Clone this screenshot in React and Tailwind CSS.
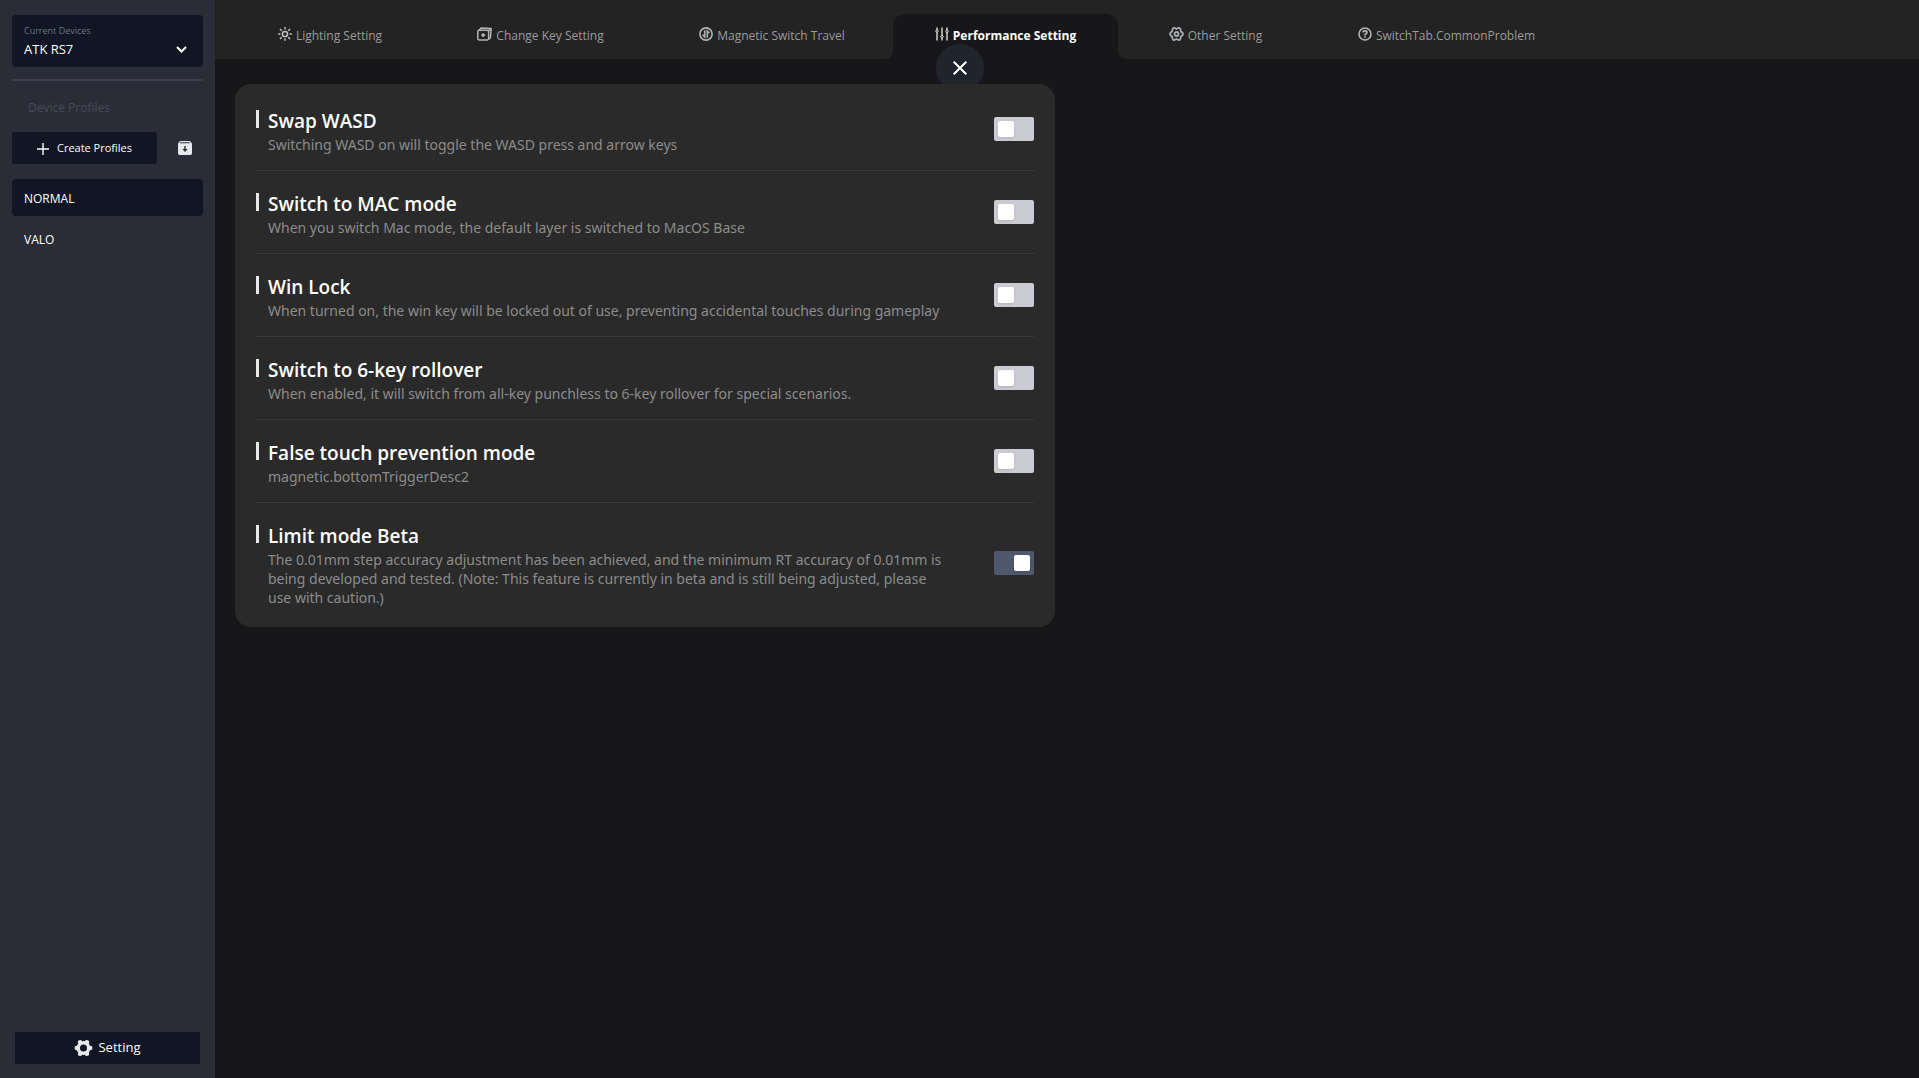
import React, { useState } from "react";

const tabs = [
  { id: "lighting", label: "Lighting Setting", icon: SunIcon, width: "w-[200px]" },
  { id: "keys", label: "Change Key Setting", icon: KeyIcon, width: "w-[221px]" },
  { id: "travel", label: "Magnetic Switch Travel", icon: TravelIcon, width: "w-[242px]" },
  { id: "performance", label: "Performance Setting", icon: SlidersIcon, width: "w-[225px]" },
  { id: "other", label: "Other Setting", icon: GearOutlineIcon, width: "w-[195px]" },
  { id: "problem", label: "SwitchTab.CommonProblem", icon: QuestionIcon, width: "w-[267px]" },
];

const options = [
  {
    id: "swap",
    title: "Swap WASD",
    desc: "Switching WASD on will toggle the WASD press and arrow keys",
  },
  {
    id: "mac",
    title: "Switch to MAC mode",
    desc: "When you switch Mac mode, the default layer is switched to MacOS Base",
  },
  {
    id: "winlock",
    title: "Win Lock",
    desc: "When turned on, the win key will be locked out of use, preventing accidental touches during gameplay",
  },
  {
    id: "rollover",
    title: "Switch to 6-key rollover",
    desc: "When enabled, it will switch from all-key punchless to 6-key rollover for special scenarios.",
  },
  {
    id: "falsetouch",
    title: "False touch prevention mode",
    desc: "magnetic.bottomTriggerDesc2",
  },
  {
    id: "limit",
    title: "Limit mode Beta",
    desc: "The 0.01mm step accuracy adjustment has been achieved, and the minimum RT accuracy of 0.01mm is being developed and tested. (Note: This feature is currently in beta and is still being adjusted, please use with caution.)",
  },
];

export default function App() {
  const [activeTab, setActiveTab] = useState("performance");
  const [profile, setProfile] = useState("NORMAL");
  const [enabled, setEnabled] = useState({ limit: true });

  const toggle = (id) => setEnabled((prev) => ({ ...prev, [id]: !prev[id] }));

  return (
    <div className="flex min-h-screen bg-[#171719] font-['Open_Sans','Noto_Sans',sans-serif] text-white">
      <Sidebar profile={profile} onSelect={setProfile} />

      <main className="relative min-w-0 flex-1">
        <nav className="flex h-[59px] items-end bg-[#232323] pl-[15px]">
          {tabs.map((tab) => (
            <Tab
              key={tab.id}
              tab={tab}
              active={tab.id === activeTab}
              onClick={() => setActiveTab(tab.id)}
            />
          ))}
        </nav>

        <section className="relative z-10 mt-[25px] ml-5 max-w-[820px] rounded-2xl bg-[#2a2a2a] px-[21px] py-1">
          {options.map((option) => (
            <OptionRow
              key={option.id}
              option={option}
              checked={!!enabled[option.id]}
              onChange={() => toggle(option.id)}
            />
          ))}
        </section>
      </main>

      <button
        type="button"
        aria-label="Close"
        className="absolute top-11 left-1/2 flex size-12 -translate-x-1/2 items-center justify-center rounded-full bg-[#20242b]"
      >
        <svg width="14" height="14" viewBox="0 0 14 14" fill="none" stroke="#fff" strokeWidth="2">
          <path d="M0.7 0.7L13.3 13.3M13.3 0.7L0.7 13.3" />
        </svg>
      </button>
    </div>
  );
}

function Sidebar({ profile, onSelect }) {
  return (
    <aside className="flex w-[215px] shrink-0 flex-col bg-[#2a2d38] px-3 pt-[15px] pb-[14px]">
      <div className="relative h-[52px] rounded bg-[#101624]">
        <label htmlFor="device" className="absolute top-2 left-3 text-[9px] leading-4 text-[#6b7280]">
          Current Devices
        </label>
        <select
          id="device"
          className="h-full w-full appearance-none rounded bg-transparent px-3 pt-[18px] text-[13px] text-white"
        >
          <option>ATK RS7</option>
        </select>
        <svg
          className="pointer-events-none absolute top-[31px] right-4"
          width="11"
          height="7"
          viewBox="0 0 11 7"
          fill="none"
          stroke="#fff"
          strokeWidth="2"
        >
          <path d="M1 1L5.5 5.5L10 1" />
        </svg>
      </div>

      <hr className="mt-3 border-t-2 border-[#3b404c]" />
      <p className="mt-[17px] px-4 text-xs leading-5 text-[#464b57]">Device Profiles</p>

      <div className="mt-[14px] flex items-center">
        <button
          type="button"
          className="flex h-8 w-[145px] items-center justify-center gap-2 rounded-xs bg-[#101624] pt-px text-[11px]"
        >
          <svg width="12" height="12" viewBox="0 0 12 12" stroke="#fff" strokeWidth="1.4">
            <path d="M6 0V12M0 6H12" />
          </svg>
          Create Profiles
        </button>
        <button type="button" aria-label="Import profile" className="ml-[21px]">
          <svg width="14" height="14" viewBox="0 0 14 14">
            <path
              fill="#e5e7eb"
              fillRule="evenodd"
              d="M2.2 0H11.8L14 2.4V12.6Q14 14 12.6 14H1.4Q0 14 0 12.6V2.4ZM2.6 1.2L1.8 2.2H12.2L11.4 1.2ZM6.3 5V8H4.4L7 11L9.6 8H7.7V5Z"
            />
          </svg>
        </button>
      </div>

      <div className="mt-[15px] flex flex-col gap-1">
        {["NORMAL", "VALO"].map((name) => (
          <button
            key={name}
            type="button"
            onClick={() => onSelect(name)}
            className={`h-[37px] rounded px-3 pt-0.5 text-left text-xs ${name === profile ? "bg-[#101624]" : ""}`}
          >
            {name}
          </button>
        ))}
      </div>

      <button
        type="button"
        className="mx-[3px] mt-auto flex h-8 items-center justify-center gap-[5px] bg-[#101624] text-[13px]"
      >
        <GearIcon />
        Setting
      </button>
    </aside>
  );
}

function Tab({ tab, active, onClick }) {
  const Icon = tab.icon;
  return (
    <button
      type="button"
      onClick={onClick}
      className={`relative flex h-[45px] shrink-0 items-start justify-center gap-1 pt-[13px] text-xs leading-[18px] whitespace-nowrap ${tab.width} ${
        active ? "rounded-t-xl bg-[#171719] font-bold text-white" : "text-[#9b9b9b]"
      }`}
    >
      {active && (
        <>
          <Flare className="absolute bottom-0 -left-2" />
          <Flare className="absolute -right-2 bottom-0 -scale-x-100" />
        </>
      )}
      <Icon />
      {tab.label}
    </button>
  );
}

// curved foot on either side of the active tab
function Flare({ className }) {
  return (
    <svg className={className} width="8" height="8" viewBox="0 0 8 8" fill="#171719">
      <path d="M8 0V8H0A8 8 0 0 0 8 0Z" />
    </svg>
  );
}

function OptionRow({ option, checked, onChange }) {
  return (
    <div className="flex items-center justify-between border-b border-[#3a3a3a] pt-5 pb-4 last:border-b-0">
      <div className="max-w-[692px]">
        <div className="flex items-start">
          <span className="mt-0.5 h-[18px] w-[3px] bg-[#e8e8e8]" />
          <label htmlFor={option.id} className="ml-[9px] text-[19px] leading-[26px] font-semibold">
            {option.title}
          </label>
        </div>
        <p className="mt-px ml-3 font-['Noto_Sans','Open_Sans',sans-serif] text-sm leading-[19px] text-[#8c8c8c]">
          {option.desc}
        </p>
      </div>
      <input
        id={option.id}
        type="checkbox"
        role="switch"
        checked={checked}
        onChange={onChange}
        className="relative mb-1 h-6 w-10 shrink-0 cursor-pointer appearance-none rounded-xs bg-[#cbccd3] before:absolute before:top-1 before:left-1 before:size-4 before:rounded-xs before:bg-white before:shadow checked:bg-[#50586d] checked:before:left-5"
      />
    </div>
  );
}

function GearIcon() {
  return (
    <svg width="19" height="18" viewBox="0 0 19 18" fill="#e5e7eb">
      <circle cx="9.5" cy="9" r="5.2" fill="none" stroke="#e5e7eb" strokeWidth="3.4" />
      <circle cx="16.2" cy="9" r="2.3" />
      <circle cx="12.9" cy="3.2" r="2.3" />
      <circle cx="6.1" cy="3.2" r="2.3" />
      <circle cx="2.8" cy="9" r="2.3" />
      <circle cx="6.1" cy="14.8" r="2.3" />
      <circle cx="12.9" cy="14.8" r="2.3" />
    </svg>
  );
}

function SunIcon() {
  return (
    <svg width="14" height="14" viewBox="0 0 14 14" fill="none" stroke="#c4c4c4" strokeWidth="1.5">
      <circle cx="7" cy="7" r="2.6" />
      <path d="M7 0.2V2.4M7 11.6V13.8M0.2 7H2.4M11.6 7H13.8M2 2L3.7 3.7M10.3 10.3L12 12M2 12L3.7 10.3M10.3 3.7L12 2" />
    </svg>
  );
}

function KeyIcon() {
  return (
    <svg width="15" height="14" viewBox="0 0 15 14" fill="none" stroke="#b4b4b4" strokeWidth="1.5" strokeLinejoin="round">
      <rect x="0.8" y="3.3" width="10.8" height="9.6" rx="1.4" />
      <path d="M2 3.2L4 0.9L14.2 1.6L13.4 10.8L11.6 12.4M11.4 3.6L14 1.8" />
      <path d="M6.2 6.2V10M4.3 8.1H8.1" strokeWidth="1.8" />
    </svg>
  );
}

function TravelIcon() {
  return (
    <svg width="14" height="14" viewBox="0 0 14 14" fill="none" stroke="#b4b4b4" strokeWidth="1.6">
      <circle cx="7" cy="7" r="6.1" />
      <path d="M5.7 3.2V10L3.6 7.8M8.3 10.8V4L10.4 6.2" />
    </svg>
  );
}

function SlidersIcon() {
  return (
    <svg width="14" height="14" viewBox="0 0 14 14" fill="none" stroke="#c4c4c4" strokeWidth="1.6">
      <path d="M2 0.5V13.5M7 0.5V13.5M12 0.5V13.5" />
      <path fill="#c4c4c4" stroke="none" d="M2 1.8L4 4L2 6.2L0 4ZM7 7.3L9 9.5L7 11.7L5 9.5ZM12 2.3L14 4.5L12 6.7L10 4.5Z" />
      <path fill="#171719" stroke="none" d="M1.5 3.5H2.5V4.5H1.5ZM6.5 9H7.5V10H6.5ZM11.5 4H12.5V5H11.5Z" />
    </svg>
  );
}

function GearOutlineIcon() {
  return (
    <svg width="15" height="14" viewBox="0 0 15 14" fill="none" stroke="#a9adb3" strokeWidth="1.8" strokeLinejoin="round">
      <path d="M7.5 1.9Q11.7 -0.9 11.8 4.4Q16.3 7 11.8 9.6Q11.7 14.9 7.5 12.1Q3.3 14.9 3.2 9.6Q-1.3 7 3.2 4.4Q3.3 -0.9 7.5 1.9Z" />
      <circle cx="7.5" cy="7" r="2" />
    </svg>
  );
}

function QuestionIcon() {
  return (
    <svg width="14" height="14" viewBox="0 0 14 14" fill="none" stroke="#b4b4b4" strokeWidth="1.6">
      <circle cx="7" cy="7" r="6" />
      <path d="M5 5.6Q5 3.9 7 3.9Q9 3.9 9 5.5Q9 6.6 7 7.4V8.4M7 9.3V10.8" />
    </svg>
  );
}
